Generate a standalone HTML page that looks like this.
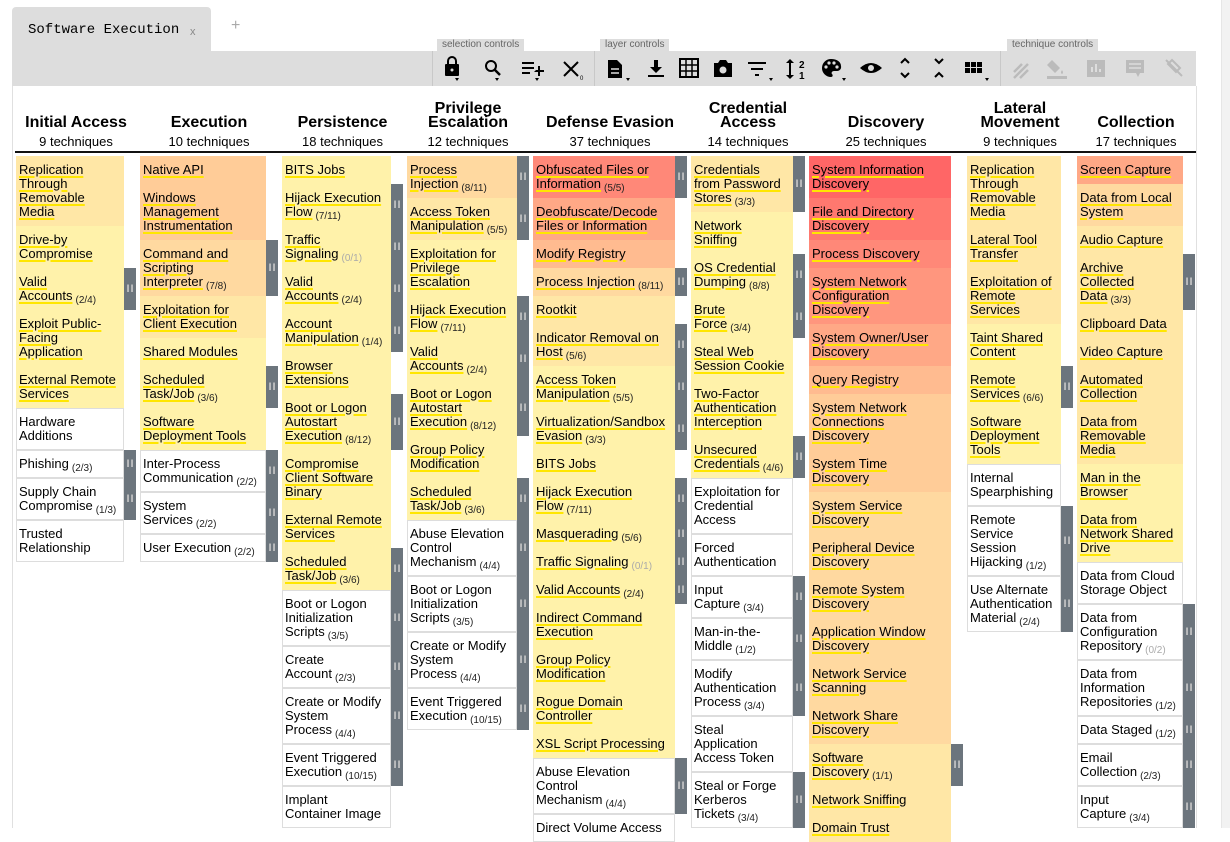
<!DOCTYPE html>
<html><head><meta charset="utf-8">
<style>
*{box-sizing:border-box;margin:0;padding:0}
body{width:1230px;height:828px;overflow:hidden;background:#fff;font-family:"Liberation Sans",Arial,sans-serif;position:relative;color:#000}
.tab{position:absolute;left:12px;top:7px;width:199px;height:45px;background:#ddd;border-radius:4px 4px 0 0}
.tab span{position:absolute;left:16px;top:15px;font-family:"Liberation Mono",monospace;font-size:14px;white-space:nowrap}
.tab i{position:absolute;left:178px;top:19px;font-style:normal;font-size:11px;color:#888}
.plus{position:absolute;left:231px;top:17px;font-size:16px;color:#aaa}
.bar{position:absolute;left:12px;top:51px;width:1184px;height:35px;background:#ddd}
.lbl{position:absolute;top:39px;height:12px;background:#ddd;font-size:10px;color:#666;line-height:12px;padding:0 5px}
.sep{position:absolute;top:51px;width:1px;height:35px;background:#c8c8c8}
.ic{position:absolute;top:56px}
.frame{position:absolute;left:12px;top:86px;width:1185px;height:742px;border-left:1px solid #e0e0e0;border-right:1px solid #e0e0e0}
.scroll{position:absolute;left:1221px;top:0;width:9px;height:828px;background:#f2f2f2;border-left:1px solid #e6e6e6}
.hl{position:absolute;left:15px;top:151px;width:1181px;height:2px;background:#111}
.h{position:absolute;top:102px;text-align:center;line-height:14px}
.h b{display:block;font-size:16px;line-height:14px;height:28px;display:flex;align-items:flex-end;justify-content:center}
.h div{font-size:13px;margin-top:5px}
.col{position:absolute;top:156px}
.c{display:flex}
.t{padding:7px 3px;line-height:14px;font-size:13px;white-space:nowrap;overflow:hidden}
.t u{text-decoration:underline;text-decoration-color:#ffe600;text-decoration-thickness:2px;text-underline-offset:2px}
.w .t{border:1px solid #ddd;padding:6px 2px;background:#fff}
.w .t u{text-decoration:none}
.n{font-size:10px;color:#222;position:relative;top:3px;margin-left:3px}
.g{color:#aaa}
.s{width:12px;flex:none}
.s.x{background:#6c757d;display:flex;align-items:center;justify-content:center;color:#c8c8c8;font-size:11px;font-weight:bold;letter-spacing:1px;padding-left:1px}
.h1{height:28px}.h2{height:42px}.h3{height:56px}.h4{height:70px}
.r1 .t{background:#ff6666}.r2 .t{background:#ff786f}.r3 .t{background:#ff8878}.r4 .t{background:#ff967e}
.o1 .t{background:#ffa886}.o2 .t{background:#ffbb90}.o3 .t{background:#ffcc98}.o4 .t{background:#ffd9a0}
.y1 .t{background:#ffe7a6}.y2 .t{background:#fff2aa}
</style></head><body>
<div class="tab"><span>Software Execution</span><i>x</i></div>
<div class="plus">+</div>
<div class="bar"></div>
<div class="lbl" style="left:437px">selection controls</div>
<div class="lbl" style="left:600px">layer controls</div>
<div class="lbl" style="left:1007px">technique controls</div>
<div class="sep" style="left:432px"></div><div class="sep" style="left:594px"></div><div class="sep" style="left:1000px"></div>
<svg class="ic" style="left:440px" width="560" height="26" viewBox="440 56 560 26">
<g fill="#000">
<rect x="445" y="64" width="14" height="12" rx="1"/><path d="M448 64v-3a4 4 0 0 1 8 0v3" fill="none" stroke="#000" stroke-width="2"/><circle cx="452" cy="70" r="1.5" fill="#ddd"/>
<circle cx="491" cy="66" r="5" fill="none" stroke="#000" stroke-width="2"/><path d="M494 69l6 6" stroke="#000" stroke-width="2.5"/>
<path d="M522 62h12v2h-12zM522 67h12v2h-12zM522 72h8v2h-8zM536 70h2v-4h2v4h4v2h-4v4h-2v-4h-4z"/>
<path d="M564 62l14 14M578 62l-14 14" stroke="#000" stroke-width="2"/>
<path d="M608 60h9l5 5v13h-14z"/><path d="M611 69h8M611 73h8" stroke="#ddd" stroke-width="1.5"/>
<path d="M654 60h4v7h4l-6 6-6-6h4zM648 75h16v2h-16z"/>
<path d="M680 59h18v18h-18z" fill="none" stroke="#000" stroke-width="2"/><path d="M686 59v18M692 59v18M680 65h18M680 71h18" stroke="#000" stroke-width="1.5"/>
<path d="M714 63h4l2-3h6l2 3h4v14h-18z"/><circle cx="723" cy="70" r="3.5" fill="#ddd"/>
<path d="M748 62h18v2h-18zM751 68h12v2h-12zM755 74h4v2h-4z"/>
<path d="M790 59l-4 4h3v12h-3l4 4 4-4h-3v-12h3z"/><text x="799" y="68" font-size="10" font-weight="bold" font-family="Liberation Sans">2</text><text x="799" y="79" font-size="10" font-weight="bold" font-family="Liberation Sans">1</text>
<path d="M831 59a9 9 0 1 0 0 18c2 0 2-2 1-3s0-3 2-3h3a4 4 0 0 0 4-5c0-4-4-7-10-7z"/>
<circle cx="826" cy="67" r="1.6" fill="#ddd"/><circle cx="829" cy="63" r="1.6" fill="#ddd"/><circle cx="834" cy="63" r="1.6" fill="#ddd"/><circle cx="837" cy="67" r="1.6" fill="#ddd"/>
<path d="M860 68q11-10 22 0q-11 10-22 0z"/><circle cx="871" cy="68" r="3" fill="#ddd"/>
<path d="M901 63l4-4 4 4M901 73l4 4 4-4" fill="none" stroke="#000" stroke-width="2"/>
<path d="M935 59l4 4 4-4M935 77l4-4 4 4" fill="none" stroke="#000" stroke-width="2"/>
<path d="M965 62h5v5h-5zM971 62h5v5h-5zM977 62h5v5h-5zM965 68h5v5h-5zM971 68h5v5h-5zM977 68h5v5h-5z"/>
<path d="M455 78l2 3 2-3zM495 78l2 3 2-3zM535 78l2 3 2-3zM626 78l2 3 2-3zM769 78l2 3 2-3zM842 78l2 3 2-3zM985 78l2 3 2-3z"/>
</g>
<text x="580" y="80" font-size="6" font-family="Liberation Sans">0</text>
</svg>
<svg class="ic" style="left:1005px" width="190" height="26" viewBox="1005 56 190 26">
<g fill="#bbb" stroke="#bbb">
<path d="M1014 72l8-8M1014 78l14-14M1020 78l8-8" stroke-width="2.5" fill="none"/>
<path d="M1052 60l8 8-5 5-8-8zM1062 70q2 3 0 4q-2-1 0-4z" stroke="none"/><rect x="1047" y="76" width="20" height="3" stroke="none"/>
<rect x="1087" y="60" width="18" height="17" stroke="none"/><path d="M1092 72v-5M1096 72v-8M1100 72v-3" stroke="#ddd" stroke-width="2"/>
<path d="M1126 60h18v13h-4l-2 4-2-4h-10z" stroke="none"/><path d="M1129 64h12M1129 68h12" stroke="#ddd" stroke-width="1.5"/>
<path d="M1166 60l16 16M1172 60l8 8-4 4-8-8z" stroke-width="2" fill="none"/>
</g></svg>
<div class="frame"></div>
<div class="scroll"></div>

<div class="h" style="left:16px;width:120px"><b>Initial Access</b><div>9 techniques</div></div>
<div class="h" style="left:140px;width:138px"><b>Execution</b><div>10 techniques</div></div>
<div class="h" style="left:282px;width:121px"><b>Persistence</b><div>18 techniques</div></div>
<div class="h" style="left:407px;width:122px"><b>Privilege<br>Escalation</b><div>12 techniques</div></div>
<div class="h" style="left:533px;width:154px"><b>Defense Evasion</b><div>37 techniques</div></div>
<div class="h" style="left:691px;width:114px"><b>Credential<br>Access</b><div>14 techniques</div></div>
<div class="h" style="left:809px;width:154px"><b>Discovery</b><div>25 techniques</div></div>
<div class="h" style="left:967px;width:106px"><b>Lateral<br>Movement</b><div>9 techniques</div></div>
<div class="h" style="left:1077px;width:118px"><b>Collection</b><div>17 techniques</div></div>
<div class="hl"></div>

<!-- Initial Access -->
<div class="col" style="left:16px">
<div class="c h4 y1"><div class="t" style="width:108px"><u>Replication</u><br><u>Through</u><br><u>Removable</u><br><u>Media</u></div><div class="s"></div></div>
<div class="c h2 y2"><div class="t" style="width:108px"><u>Drive-by</u><br><u>Compromise</u></div><div class="s"></div></div>
<div class="c h2 y2"><div class="t" style="width:108px"><u>Valid</u><br><u>Accounts</u><span class="n">(2/4)</span></div><div class="s x">II</div></div>
<div class="c h3 y2"><div class="t" style="width:108px"><u>Exploit Public-</u><br><u>Facing</u><br><u>Application</u></div><div class="s"></div></div>
<div class="c h2 y2"><div class="t" style="width:108px"><u>External Remote</u><br><u>Services</u></div><div class="s"></div></div>
<div class="c h2 w"><div class="t" style="width:108px"><u>Hardware</u><br><u>Additions</u></div><div class="s"></div></div>
<div class="c h1 w"><div class="t" style="width:108px"><u>Phishing</u><span class="n">(2/3)</span></div><div class="s x">II</div></div>
<div class="c h2 w"><div class="t" style="width:108px"><u>Supply Chain</u><br><u>Compromise</u><span class="n">(1/3)</span></div><div class="s x">II</div></div>
<div class="c h2 w"><div class="t" style="width:108px"><u>Trusted</u><br><u>Relationship</u></div><div class="s"></div></div>
</div>

<!-- Execution -->
<div class="col" style="left:140px">
<div class="c h1 o3"><div class="t" style="width:126px"><u>Native API</u></div><div class="s"></div></div>
<div class="c h3 o3"><div class="t" style="width:126px"><u>Windows</u><br><u>Management</u><br><u>Instrumentation</u></div><div class="s"></div></div>
<div class="c h3 o4"><div class="t" style="width:126px"><u>Command and</u><br><u>Scripting</u><br><u>Interpreter</u><span class="n">(7/8)</span></div><div class="s x">II</div></div>
<div class="c h2 y1"><div class="t" style="width:126px"><u>Exploitation for</u><br><u>Client Execution</u></div><div class="s"></div></div>
<div class="c h1 y2"><div class="t" style="width:126px"><u>Shared Modules</u></div><div class="s"></div></div>
<div class="c h2 y2"><div class="t" style="width:126px"><u>Scheduled</u><br><u>Task/Job</u><span class="n">(3/6)</span></div><div class="s x">II</div></div>
<div class="c h2 y2"><div class="t" style="width:126px"><u>Software</u><br><u>Deployment Tools</u></div><div class="s"></div></div>
<div class="c h2 w"><div class="t" style="width:126px"><u>Inter-Process</u><br><u>Communication</u><span class="n">(2/2)</span></div><div class="s x">II</div></div>
<div class="c h2 w"><div class="t" style="width:126px"><u>System</u><br><u>Services</u><span class="n">(2/2)</span></div><div class="s x">II</div></div>
<div class="c h1 w"><div class="t" style="width:126px"><u>User Execution</u><span class="n">(2/2)</span></div><div class="s x">II</div></div>
</div>

<!-- Persistence -->
<div class="col" style="left:282px">
<div class="c h1 y2"><div class="t" style="width:109px"><u>BITS Jobs</u></div><div class="s"></div></div>
<div class="c h2 y2"><div class="t" style="width:109px"><u>Hijack Execution</u><br><u>Flow</u><span class="n">(7/11)</span></div><div class="s x">II</div></div>
<div class="c h2 y2"><div class="t" style="width:109px"><u>Traffic</u><br><u>Signaling</u><span class="n g">(0/1)</span></div><div class="s x">II</div></div>
<div class="c h2 y2"><div class="t" style="width:109px"><u>Valid</u><br><u>Accounts</u><span class="n">(2/4)</span></div><div class="s x">II</div></div>
<div class="c h2 y2"><div class="t" style="width:109px"><u>Account</u><br><u>Manipulation</u><span class="n">(1/4)</span></div><div class="s x">II</div></div>
<div class="c h2 y2"><div class="t" style="width:109px"><u>Browser</u><br><u>Extensions</u></div><div class="s"></div></div>
<div class="c h3 y2"><div class="t" style="width:109px"><u>Boot or Logon</u><br><u>Autostart</u><br><u>Execution</u><span class="n">(8/12)</span></div><div class="s x">II</div></div>
<div class="c h3 y2"><div class="t" style="width:109px"><u>Compromise</u><br><u>Client Software</u><br><u>Binary</u></div><div class="s"></div></div>
<div class="c h2 y2"><div class="t" style="width:109px"><u>External Remote</u><br><u>Services</u></div><div class="s"></div></div>
<div class="c h2 y2"><div class="t" style="width:109px"><u>Scheduled</u><br><u>Task/Job</u><span class="n">(3/6)</span></div><div class="s x">II</div></div>
<div class="c h3 w"><div class="t" style="width:109px"><u>Boot or Logon</u><br><u>Initialization</u><br><u>Scripts</u><span class="n">(3/5)</span></div><div class="s x">II</div></div>
<div class="c h2 w"><div class="t" style="width:109px"><u>Create</u><br><u>Account</u><span class="n">(2/3)</span></div><div class="s x">II</div></div>
<div class="c h3 w"><div class="t" style="width:109px"><u>Create or Modify</u><br><u>System</u><br><u>Process</u><span class="n">(4/4)</span></div><div class="s x">II</div></div>
<div class="c h2 w"><div class="t" style="width:109px"><u>Event Triggered</u><br><u>Execution</u><span class="n">(10/15)</span></div><div class="s x">II</div></div>
<div class="c h2 w"><div class="t" style="width:109px"><u>Implant</u><br><u>Container Image</u></div><div class="s"></div></div>
</div>

<!-- Privilege Escalation -->
<div class="col" style="left:407px">
<div class="c h2 o4"><div class="t" style="width:110px"><u>Process</u><br><u>Injection</u><span class="n">(8/11)</span></div><div class="s x">II</div></div>
<div class="c h2 y1"><div class="t" style="width:110px"><u>Access Token</u><br><u>Manipulation</u><span class="n">(5/5)</span></div><div class="s x">II</div></div>
<div class="c h3 y2"><div class="t" style="width:110px"><u>Exploitation for</u><br><u>Privilege</u><br><u>Escalation</u></div><div class="s"></div></div>
<div class="c h2 y2"><div class="t" style="width:110px"><u>Hijack Execution</u><br><u>Flow</u><span class="n">(7/11)</span></div><div class="s x">II</div></div>
<div class="c h2 y2"><div class="t" style="width:110px"><u>Valid</u><br><u>Accounts</u><span class="n">(2/4)</span></div><div class="s x">II</div></div>
<div class="c h3 y2"><div class="t" style="width:110px"><u>Boot or Logon</u><br><u>Autostart</u><br><u>Execution</u><span class="n">(8/12)</span></div><div class="s x">II</div></div>
<div class="c h2 y2"><div class="t" style="width:110px"><u>Group Policy</u><br><u>Modification</u></div><div class="s"></div></div>
<div class="c h2 y2"><div class="t" style="width:110px"><u>Scheduled</u><br><u>Task/Job</u><span class="n">(3/6)</span></div><div class="s x">II</div></div>
<div class="c h3 w"><div class="t" style="width:110px"><u>Abuse Elevation</u><br><u>Control</u><br><u>Mechanism</u><span class="n">(4/4)</span></div><div class="s x">II</div></div>
<div class="c h3 w"><div class="t" style="width:110px"><u>Boot or Logon</u><br><u>Initialization</u><br><u>Scripts</u><span class="n">(3/5)</span></div><div class="s x">II</div></div>
<div class="c h3 w"><div class="t" style="width:110px"><u>Create or Modify</u><br><u>System</u><br><u>Process</u><span class="n">(4/4)</span></div><div class="s x">II</div></div>
<div class="c h2 w"><div class="t" style="width:110px"><u>Event Triggered</u><br><u>Execution</u><span class="n">(10/15)</span></div><div class="s x">II</div></div>
</div>

<!-- Defense Evasion -->
<div class="col" style="left:533px">
<div class="c h2 r3"><div class="t" style="width:142px"><u>Obfuscated Files or</u><br><u>Information</u><span class="n">(5/5)</span></div><div class="s x">II</div></div>
<div class="c h2 o1"><div class="t" style="width:142px"><u>Deobfuscate/Decode</u><br><u>Files or Information</u></div><div class="s"></div></div>
<div class="c h1 o2"><div class="t" style="width:142px"><u>Modify Registry</u></div><div class="s"></div></div>
<div class="c h1 o4"><div class="t" style="width:142px"><u>Process Injection</u><span class="n">(8/11)</span></div><div class="s x">II</div></div>
<div class="c h1 y1"><div class="t" style="width:142px"><u>Rootkit</u></div><div class="s"></div></div>
<div class="c h2 y1"><div class="t" style="width:142px"><u>Indicator Removal on</u><br><u>Host</u><span class="n">(5/6)</span></div><div class="s x">II</div></div>
<div class="c h2 y2"><div class="t" style="width:142px"><u>Access Token</u><br><u>Manipulation</u><span class="n">(5/5)</span></div><div class="s x">II</div></div>
<div class="c h2 y2"><div class="t" style="width:142px"><u>Virtualization/Sandbox</u><br><u>Evasion</u><span class="n">(3/3)</span></div><div class="s x">II</div></div>
<div class="c h1 y2"><div class="t" style="width:142px"><u>BITS Jobs</u></div><div class="s"></div></div>
<div class="c h2 y2"><div class="t" style="width:142px"><u>Hijack Execution</u><br><u>Flow</u><span class="n">(7/11)</span></div><div class="s x">II</div></div>
<div class="c h1 y2"><div class="t" style="width:142px"><u>Masquerading</u><span class="n">(5/6)</span></div><div class="s x">II</div></div>
<div class="c h1 y2"><div class="t" style="width:142px"><u>Traffic Signaling</u><span class="n g">(0/1)</span></div><div class="s x">II</div></div>
<div class="c h1 y2"><div class="t" style="width:142px"><u>Valid Accounts</u><span class="n">(2/4)</span></div><div class="s x">II</div></div>
<div class="c h2 y2"><div class="t" style="width:142px"><u>Indirect Command</u><br><u>Execution</u></div><div class="s"></div></div>
<div class="c h2 y2"><div class="t" style="width:142px"><u>Group Policy</u><br><u>Modification</u></div><div class="s"></div></div>
<div class="c h2 y2"><div class="t" style="width:142px"><u>Rogue Domain</u><br><u>Controller</u></div><div class="s"></div></div>
<div class="c h1 y2"><div class="t" style="width:142px"><u>XSL Script Processing</u></div><div class="s"></div></div>
<div class="c h3 w"><div class="t" style="width:142px"><u>Abuse Elevation</u><br><u>Control</u><br><u>Mechanism</u><span class="n">(4/4)</span></div><div class="s x">II</div></div>
<div class="c h1 w"><div class="t" style="width:142px"><u>Direct Volume Access</u></div><div class="s"></div></div>
</div>

<!-- Credential Access -->
<div class="col" style="left:691px">
<div class="c h3 y1"><div class="t" style="width:102px"><u>Credentials</u><br><u>from Password</u><br><u>Stores</u><span class="n">(3/3)</span></div><div class="s x">II</div></div>
<div class="c h2 y2"><div class="t" style="width:102px"><u>Network</u><br><u>Sniffing</u></div><div class="s"></div></div>
<div class="c h2 y2"><div class="t" style="width:102px"><u>OS Credential</u><br><u>Dumping</u><span class="n">(8/8)</span></div><div class="s x">II</div></div>
<div class="c h2 y2"><div class="t" style="width:102px"><u>Brute</u><br><u>Force</u><span class="n">(3/4)</span></div><div class="s x">II</div></div>
<div class="c h2 y2"><div class="t" style="width:102px"><u>Steal Web</u><br><u>Session Cookie</u></div><div class="s"></div></div>
<div class="c h3 y2"><div class="t" style="width:102px"><u>Two-Factor</u><br><u>Authentication</u><br><u>Interception</u></div><div class="s"></div></div>
<div class="c h2 y2"><div class="t" style="width:102px"><u>Unsecured</u><br><u>Credentials</u><span class="n">(4/6)</span></div><div class="s x">II</div></div>
<div class="c h3 w"><div class="t" style="width:102px"><u>Exploitation for</u><br><u>Credential</u><br><u>Access</u></div><div class="s"></div></div>
<div class="c h2 w"><div class="t" style="width:102px"><u>Forced</u><br><u>Authentication</u></div><div class="s"></div></div>
<div class="c h2 w"><div class="t" style="width:102px"><u>Input</u><br><u>Capture</u><span class="n">(3/4)</span></div><div class="s x">II</div></div>
<div class="c h2 w"><div class="t" style="width:102px"><u>Man-in-the-</u><br><u>Middle</u><span class="n">(1/2)</span></div><div class="s x">II</div></div>
<div class="c h3 w"><div class="t" style="width:102px"><u>Modify</u><br><u>Authentication</u><br><u>Process</u><span class="n">(3/4)</span></div><div class="s x">II</div></div>
<div class="c h3 w"><div class="t" style="width:102px"><u>Steal</u><br><u>Application</u><br><u>Access Token</u></div><div class="s"></div></div>
<div class="c h3 w"><div class="t" style="width:102px"><u>Steal or Forge</u><br><u>Kerberos</u><br><u>Tickets</u><span class="n">(3/4)</span></div><div class="s x">II</div></div>
</div>

<!-- Discovery -->
<div class="col" style="left:809px">
<div class="c h2 r1"><div class="t" style="width:142px"><u>System Information</u><br><u>Discovery</u></div><div class="s"></div></div>
<div class="c h2 r2"><div class="t" style="width:142px"><u>File and Directory</u><br><u>Discovery</u></div><div class="s"></div></div>
<div class="c h1 r3"><div class="t" style="width:142px"><u>Process Discovery</u></div><div class="s"></div></div>
<div class="c h3 r4"><div class="t" style="width:142px"><u>System Network</u><br><u>Configuration</u><br><u>Discovery</u></div><div class="s"></div></div>
<div class="c h2 o1"><div class="t" style="width:142px"><u>System Owner/User</u><br><u>Discovery</u></div><div class="s"></div></div>
<div class="c h1 o2"><div class="t" style="width:142px"><u>Query Registry</u></div><div class="s"></div></div>
<div class="c h3 o3"><div class="t" style="width:142px"><u>System Network</u><br><u>Connections</u><br><u>Discovery</u></div><div class="s"></div></div>
<div class="c h2 o3"><div class="t" style="width:142px"><u>System Time</u><br><u>Discovery</u></div><div class="s"></div></div>
<div class="c h2 o4"><div class="t" style="width:142px"><u>System Service</u><br><u>Discovery</u></div><div class="s"></div></div>
<div class="c h2 o4"><div class="t" style="width:142px"><u>Peripheral Device</u><br><u>Discovery</u></div><div class="s"></div></div>
<div class="c h2 o4"><div class="t" style="width:142px"><u>Remote System</u><br><u>Discovery</u></div><div class="s"></div></div>
<div class="c h2 o4"><div class="t" style="width:142px"><u>Application Window</u><br><u>Discovery</u></div><div class="s"></div></div>
<div class="c h2 o4"><div class="t" style="width:142px"><u>Network Service</u><br><u>Scanning</u></div><div class="s"></div></div>
<div class="c h2 o4"><div class="t" style="width:142px"><u>Network Share</u><br><u>Discovery</u></div><div class="s"></div></div>
<div class="c h2 y1"><div class="t" style="width:142px"><u>Software</u><br><u>Discovery</u><span class="n">(1/1)</span></div><div class="s x">II</div></div>
<div class="c h1 y1"><div class="t" style="width:142px"><u>Network Sniffing</u></div><div class="s"></div></div>
<div class="c h1 y1"><div class="t" style="width:142px"><u>Domain Trust</u></div><div class="s"></div></div>
</div>

<!-- Lateral Movement -->
<div class="col" style="left:967px">
<div class="c h4 y1"><div class="t" style="width:94px"><u>Replication</u><br><u>Through</u><br><u>Removable</u><br><u>Media</u></div><div class="s"></div></div>
<div class="c h2 y1"><div class="t" style="width:94px"><u>Lateral Tool</u><br><u>Transfer</u></div><div class="s"></div></div>
<div class="c h3 y1"><div class="t" style="width:94px"><u>Exploitation of</u><br><u>Remote</u><br><u>Services</u></div><div class="s"></div></div>
<div class="c h2 y2"><div class="t" style="width:94px"><u>Taint Shared</u><br><u>Content</u></div><div class="s"></div></div>
<div class="c h2 y2"><div class="t" style="width:94px"><u>Remote</u><br><u>Services</u><span class="n">(6/6)</span></div><div class="s x">II</div></div>
<div class="c h3 y2"><div class="t" style="width:94px"><u>Software</u><br><u>Deployment</u><br><u>Tools</u></div><div class="s"></div></div>
<div class="c h2 w"><div class="t" style="width:94px"><u>Internal</u><br><u>Spearphishing</u></div><div class="s"></div></div>
<div class="c h4 w"><div class="t" style="width:94px"><u>Remote</u><br><u>Service</u><br><u>Session</u><br><u>Hijacking</u><span class="n">(1/2)</span></div><div class="s x">II</div></div>
<div class="c h3 w"><div class="t" style="width:94px"><u>Use Alternate</u><br><u>Authentication</u><br><u>Material</u><span class="n">(2/4)</span></div><div class="s x">II</div></div>
</div>

<!-- Collection -->
<div class="col" style="left:1077px">
<div class="c h1 o1"><div class="t" style="width:106px"><u>Screen Capture</u></div><div class="s"></div></div>
<div class="c h2 o4"><div class="t" style="width:106px"><u>Data from Local</u><br><u>System</u></div><div class="s"></div></div>
<div class="c h1 y1"><div class="t" style="width:106px"><u>Audio Capture</u></div><div class="s"></div></div>
<div class="c h3 y1"><div class="t" style="width:106px"><u>Archive</u><br><u>Collected</u><br><u>Data</u><span class="n">(3/3)</span></div><div class="s x">II</div></div>
<div class="c h1 y1"><div class="t" style="width:106px"><u>Clipboard Data</u></div><div class="s"></div></div>
<div class="c h1 y1"><div class="t" style="width:106px"><u>Video Capture</u></div><div class="s"></div></div>
<div class="c h2 y1"><div class="t" style="width:106px"><u>Automated</u><br><u>Collection</u></div><div class="s"></div></div>
<div class="c h3 y1"><div class="t" style="width:106px"><u>Data from</u><br><u>Removable</u><br><u>Media</u></div><div class="s"></div></div>
<div class="c h2 y2"><div class="t" style="width:106px"><u>Man in the</u><br><u>Browser</u></div><div class="s"></div></div>
<div class="c h3 y2"><div class="t" style="width:106px"><u>Data from</u><br><u>Network Shared</u><br><u>Drive</u></div><div class="s"></div></div>
<div class="c h2 w"><div class="t" style="width:106px"><u>Data from Cloud</u><br><u>Storage Object</u></div><div class="s"></div></div>
<div class="c h3 w"><div class="t" style="width:106px"><u>Data from</u><br><u>Configuration</u><br><u>Repository</u><span class="n g">(0/2)</span></div><div class="s x">II</div></div>
<div class="c h3 w"><div class="t" style="width:106px"><u>Data from</u><br><u>Information</u><br><u>Repositories</u><span class="n">(1/2)</span></div><div class="s x">II</div></div>
<div class="c h1 w"><div class="t" style="width:106px"><u>Data Staged</u><span class="n">(1/2)</span></div><div class="s x">II</div></div>
<div class="c h2 w"><div class="t" style="width:106px"><u>Email</u><br><u>Collection</u><span class="n">(2/3)</span></div><div class="s x">II</div></div>
<div class="c h2 w"><div class="t" style="width:106px"><u>Input</u><br><u>Capture</u><span class="n">(3/4)</span></div><div class="s x">II</div></div>
</div>
</body></html>
